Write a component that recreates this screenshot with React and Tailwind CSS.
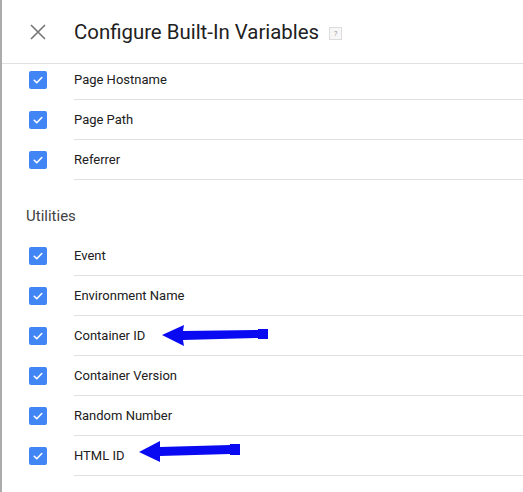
import React from "react";

const topRows = ["Page Hostname", "Page Path", "Referrer"];

const utilityRows = [
  "Event",
  "Environment Name",
  "Container ID",
  "Container Version",
  "Random Number",
  "HTML ID",
];

function Checkbox() {
  return (
    <span className="flex h-[18px] w-[18px] items-center justify-center rounded-[2px] bg-[#4285f4]">
      <svg width="12" height="12" viewBox="0 0 24 24" fill="none">
        <path d="M4.5 12.5l5 5L19.5 7" stroke="#fff" strokeWidth="3.2" strokeLinecap="round" strokeLinejoin="round" />
      </svg>
    </span>
  );
}

function Row({ label }) {
  return (
    <div className="flex h-10 items-stretch">
      <div className="flex w-[45px] shrink-0 items-center">
        <Checkbox />
      </div>
      <div className="flex flex-1 items-center border-b border-[#e0e0e0] text-[13px] text-[#202020]">
        {label}
      </div>
    </div>
  );
}

export default function App() {
  return (
    <div
      className="relative h-[492px] w-full overflow-hidden border-l-2 border-[#ababab] bg-white"
      style={{ fontFamily: "Roboto, 'Noto Sans', sans-serif" }}
    >
      <header className="flex h-16 items-center border-b border-[#e0e0e0] pl-[27px]">
        <button type="button" className="flex w-[45px] items-center">
          <svg width="18" height="18" viewBox="0 0 18 18">
            <path d="M2 2l14 14M16 2L2 16" stroke="#757575" strokeWidth="1.6" />
          </svg>
        </button>
        <h1 className="mt-[2px] text-[20.4px] leading-none text-[#212121]">Configure Built-In Variables</h1>
        <span className="ml-[10px] mt-[4px] flex h-[13px] w-[13px] items-center justify-center border border-[#dcdcdc] bg-[#f7f7f7] text-[8px] leading-none text-[#9e9e9e]">
          ?
        </span>
      </header>

      <div className="overflow-hidden">
        <div className="-mt-1 pl-[27px]">
          {topRows.map((label) => (
            <Row key={label} label={label} />
          ))}
          <p className="-ml-[3px] pb-[10px] pt-[26px] text-[15px] leading-5 text-[#424242]">Utilities</p>
          {utilityRows.map((label) => (
            <Row key={label} label={label} />
          ))}
        </div>
      </div>

      {/* annotation arrows */}
      <svg className="pointer-events-none absolute left-[-2px] top-0" width="523" height="492">
        <polygon
          points="162,335 184,325 183,331 258,330 258,329 268,329 268,339 258,339 258,338 183,340 184,346"
          fill="#0a0af2"
        />
        <polygon
          points="139,452 160,441 160,447 230,445 230,444 240,444 240,455 230,455 230,454 160,456 160,462"
          fill="#0a0af2"
        />
      </svg>
    </div>
  );
}
